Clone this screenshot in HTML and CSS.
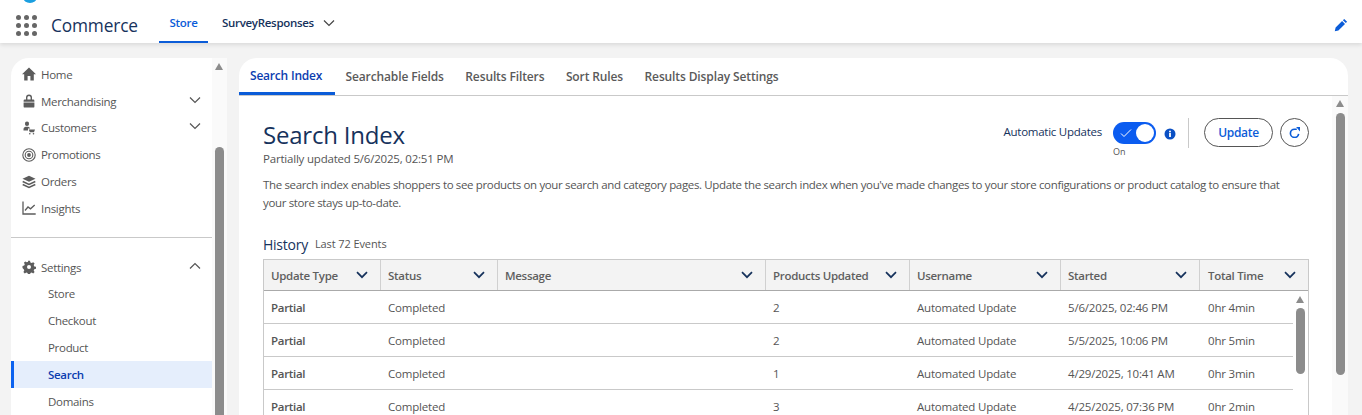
FILE: index.html
```html
<!DOCTYPE html>
<html lang="en">
<head>
<meta charset="UTF-8" />
<title>Commerce - Search Index</title>
<link rel="stylesheet" href="styles.css">
</head>
<body>
  <header class="topbar">
    <span class="logo-dot"></span>
    <div class="waffle">
      <i></i><i></i><i></i><i></i><i></i><i></i><i></i><i></i><i></i>
    </div>
    <div class="app-name">Commerce</div>
    <nav class="app-nav">
      <a class="app-tab active">Store</a>
      <a class="app-tab">SurveyResponses
        <svg class="chev-sm" viewBox="0 0 12 8"><path d="M1 1.500l5 5 5-5" fill="none" stroke="#444" stroke-width="1.200"/></svg>
      </a>
    </nav>
    <svg class="edit" viewBox="0 0 14 14"><path d="M10.200.9l2.900 2.900-1.300 1.300-2.900-2.900zM8.100 3l2.900 2.900-6.600 6.600-3.600.8.800-3.700z" fill="#0b5cd8"/></svg>
  </header>

  <div class="shell">
    <aside class="sidebar">
      <div class="side-list">
        <a class="side-item"><svg class="ico" viewBox="0 0 14 14"><path d="M7 .5L0 7.200h2.200V13.500h3.400V9h2.800v4.500h3.400V7.200H14z" fill="#5c5c5c"/></svg>Home</a>
        <a class="side-item"><svg class="ico" viewBox="0 0 14 14"><path d="M4 5.500V3.500a3 3 0 016 0v2H8.600v-2a1.600 1.600 0 00-3.200 0v2zM2.800 5.500h8.400a1.200 1.200 0 011.200 1.200v1.100H1.600V6.700a1.200 1.200 0 011.200-1.200zM1.600 8.400h10.800v4a1.200 1.200 0 01-1.200 1.200H2.800a1.200 1.200 0 01-1.200-1.200z" fill="#5c5c5c"/></svg>Merchandising<svg class="chev" viewBox="0 0 12 8"><path d="M1 1.500l5 5 5-5" fill="none" stroke="#555" stroke-width="1.200"/></svg></a>
        <a class="side-item"><svg class="ico" viewBox="0 0 14 14"><path d="M5 .5a2 2 0 012 2.200C7 4 6.300 5 5 5S3 4 3 2.700A2 2 0 015 .5zM1.500 8c0-1.600 1.500-2.200 3.500-2.200S7.700 6.300 8.200 7.400H6V9.500H1.500zM6.800 8.500H13l-1 2.800H7.800zM7.800 12a.8.8 0 110 1.600.8.800 0 010-1.600zM11.500 12a.8.8 0 110 1.600.8.800 0 010-1.600z" fill="#5c5c5c"/></svg>Customers<svg class="chev" viewBox="0 0 12 8"><path d="M1 1.500l5 5 5-5" fill="none" stroke="#555" stroke-width="1.200"/></svg></a>
        <a class="side-item"><svg class="ico" viewBox="0 0 14 14"><g fill="none" stroke="#5c5c5c" stroke-width="1.100"><circle cx="7" cy="7" r="6.200"/><circle cx="7" cy="7" r="3.800"/></g><circle cx="7" cy="7" r="1.900" fill="#5c5c5c"/></svg>Promotions</a>
        <a class="side-item"><svg class="ico" viewBox="0 0 14 14"><path d="M7 .8l6.500 3L7 6.800.5 3.800z" fill="#5c5c5c"/><path d="M.7 6.500L7 9.400l6.300-2.900M.7 9.500L7 12.400l6.300-2.900" fill="none" stroke="#5c5c5c" stroke-width="1.500"/></svg>Orders</a>
        <a class="side-item"><svg class="ico" viewBox="0 0 14 14"><path d="M1 .5v12.500h12.700" fill="none" stroke="#5c5c5c" stroke-width="1.300"/><path d="M3 9.500l3-3.500 2.500 1.800L12.700 4" fill="none" stroke="#5c5c5c" stroke-width="1.300"/></svg>Insights</a>
      </div>
      <div class="side-rule"></div>
      <div class="side-list">
        <a class="side-item"><svg class="ico" viewBox="0 0 14 14"><path fill-rule="evenodd" d="M6 .8h2l.4 1.700 1.300.6 1.500-.9 1.400 1.400-.9 1.500.6 1.300 1.700.4v2l-1.700.4-.6 1.300.9 1.500-1.400 1.400-1.500-.9-1.300.6-.4 1.700H6l-.4-1.700-1.300-.6-1.500.9-1.400-1.400.9-1.500-.6-1.300L.5 8V6l1.700-.4.600-1.300-.9-1.500 1.400-1.400 1.500.9 1.300-.6zM7 5a2 2 0 100 4 2 2 0 000-4z" fill="#5c5c5c"/></svg>Settings<svg class="chev" viewBox="0 0 12 8"><path d="M1 6.500l5-5 5 5" fill="none" stroke="#555" stroke-width="1.200"/></svg></a>
        <a class="side-item sub">Store</a>
        <a class="side-item sub">Checkout</a>
        <a class="side-item sub">Product</a>
        <a class="side-item sub selected">Search</a>
        <a class="side-item sub">Domains</a>
      </div>
      <div class="scroll side-scroll"><b class="arrow"></b><b class="thumb"></b></div>
    </aside>

    <main class="card">
      <nav class="tabs">
        <a class="tab active">Search Index</a>
        <a class="tab">Searchable Fields</a>
        <a class="tab">Results Filters</a>
        <a class="tab">Sort Rules</a>
        <a class="tab">Results Display Settings</a>
      </nav>
      <div class="card-body">
        <section class="content">
          <div class="title-row">
            <div>
              <h1>Search Index</h1>
              <div class="updated">Partially updated 5/6/2025, 02:51 PM</div>
            </div>
            <div class="actions">
              <span class="auto-label">Automatic Updates</span>
              <div class="toggle-wrap">
                <div class="toggle">
                  <svg viewBox="0 0 12 10"><path d="M1 5.500l3 3 7-7" fill="none" stroke="#fff" stroke-width="1"/></svg>
                  <span class="knob"></span>
                </div>
                <span class="toggle-state">On</span>
              </div>
              <svg class="info" viewBox="0 0 12 12"><circle cx="6" cy="6" r="5.500" fill="#0b50c4"/><rect x="5.100" y="5" width="1.800" height="4" fill="#fff"/><rect x="5.100" y="2.700" width="1.800" height="1.600" fill="#fff"/></svg>
              <span class="v-rule"></span>
              <button class="btn">Update</button>
              <button class="btn-icon"><svg viewBox="0 0 12 12"><path d="M10.500 7.500A4.500 4.500 0 116 2.400h2.500" fill="none" stroke="#0b5cd8" stroke-width="1.800"/><path d="M7.800 0l4.200 0v4.800z" fill="#0b5cd8"/></svg></button>
            </div>
          </div>
          <p class="desc">The search index enables shoppers to see products on your search and category pages. Update the search index when you've made changes to your store configurations or product catalog to ensure that your store stays up-to-date.</p>
          <div class="history-head"><h2>History</h2><span>Last 72 Events</span></div>
          <div class="table">
            <div class="row head">
              <div class="th">Update Type<svg viewBox="0 0 12 8"><path d="M1 1.200l5 5 5-5" fill="none" stroke="#16325c" stroke-width="1.700"/></svg></div>
              <div class="th">Status<svg viewBox="0 0 12 8"><path d="M1 1.200l5 5 5-5" fill="none" stroke="#16325c" stroke-width="1.700"/></svg></div>
              <div class="th">Message<svg viewBox="0 0 12 8"><path d="M1 1.200l5 5 5-5" fill="none" stroke="#16325c" stroke-width="1.700"/></svg></div>
              <div class="th">Products Updated<svg viewBox="0 0 12 8"><path d="M1 1.200l5 5 5-5" fill="none" stroke="#16325c" stroke-width="1.700"/></svg></div>
              <div class="th">Username<svg viewBox="0 0 12 8"><path d="M1 1.200l5 5 5-5" fill="none" stroke="#16325c" stroke-width="1.700"/></svg></div>
              <div class="th">Started<svg viewBox="0 0 12 8"><path d="M1 1.200l5 5 5-5" fill="none" stroke="#16325c" stroke-width="1.700"/></svg></div>
              <div class="th last">Total Time<svg viewBox="0 0 12 8"><path d="M1 1.200l5 5 5-5" fill="none" stroke="#16325c" stroke-width="1.700"/></svg></div>
            </div>
            <div class="table-body">
              <div class="rows">
                <div class="row"><div class="td strong">Partial</div><div class="td">Completed</div><div class="td"></div><div class="td">2</div><div class="td">Automated Update</div><div class="td">5/6/2025, 02:46 PM</div><div class="td">0hr 4min</div></div>
                <div class="row"><div class="td strong">Partial</div><div class="td">Completed</div><div class="td"></div><div class="td">2</div><div class="td">Automated Update</div><div class="td">5/5/2025, 10:06 PM</div><div class="td">0hr 5min</div></div>
                <div class="row"><div class="td strong">Partial</div><div class="td">Completed</div><div class="td"></div><div class="td">1</div><div class="td">Automated Update</div><div class="td">4/29/2025, 10:41 AM</div><div class="td">0hr 3min</div></div>
                <div class="row"><div class="td strong">Partial</div><div class="td">Completed</div><div class="td"></div><div class="td">3</div><div class="td">Automated Update</div><div class="td">4/25/2025, 07:36 PM</div><div class="td">0hr 2min</div></div>
              </div>
              <div class="scroll table-scroll"><b class="arrow"></b><b class="thumb"></b></div>
            </div>
          </div>
        </section>
        <div class="scroll main-scroll"><b class="arrow"></b><b class="thumb"></b></div>
      </div>
    </main>
  </div>
</body>
</html>
```

FILE: styles.css
```css
* { box-sizing: border-box; }
html, body { height: 100%; }
body { margin: 0; height: 415px; overflow: hidden; background: #f3f3f3; color: #444; font-family: "Open Sans", "Noto Sans", Arial, sans-serif; font-size: 12px; }
svg { display: block; flex: none; }
h1, h2, p { margin: 0; font-weight: 400; }

/* top bar */
.topbar { position: relative; display: flex; align-items: center; height: 43px; padding: 7px 14px 0 16px; background: #fff; box-shadow: 0 2px 4px rgba(0,0,0,.1); }
.logo-dot { position: absolute; left: 23px; top: -9px; width: 14px; height: 12px; border-radius: 50%; background: #1b9fe0; }
.waffle { display: grid; grid-template-columns: repeat(3, 5px); gap: 3px; width: 21px; }
.waffle i { width: 5px; height: 5px; border-radius: 50%; background: #666; }
.app-name { margin-left: 14px; width: 108px; font-size: 17.300px; color: #16325c; letter-spacing: -.15px; }
.app-nav { display: flex; align-self: stretch; }
.app-tab { display: flex; align-items: center; gap: 9px; padding: 0 11px 5px; margin-right: 3px; font-size: 11.500px; font-weight: 600; color: #16325c; letter-spacing: -.3px; }
.app-tab.active { width: 49px; color: #0b5cd8; border-bottom: 2px solid #0b5cd8; padding: 0 0 3px 10.500px; margin-right: 3px; }
.chev-sm { width: 12px; height: 8px; }
.edit { margin-left: auto; width: 14px; height: 14px; margin-top: -1px; }

/* page */
.shell { display: grid; grid-template-columns: 216px 1109px; column-gap: 12px; padding: 15px 0 0 11px; height: 372px; }

/* sidebar */
.sidebar { position: relative; height: 357px; background: #fff; border-radius: 18px 0 0 0; padding-right: 15px; }
.side-list { padding-top: 3px; }
.side-list + .side-rule + .side-list { padding-top: 4px; }
.side-item { display: flex; align-items: center; height: 26.800px; padding: 0 11px; font-size: 11.500px; color: #555; letter-spacing: -.3px; }
.ico { width: 14px; height: 14px; margin-right: 5px; }
.chev { width: 12px; height: 8px; margin-left: auto; margin-top: -3px; }
.side-item.sub { padding-left: 37px; }
.side-item.selected { color: #0b3db0; font-weight: 600; background: #e5eefc; border-left: 3px solid #0b62f0; padding-left: 34px; }
.side-rule { height: 1px; margin: 15px 0 12px; background: #c9c9c9; }

/* scrollbars */
.scroll { position: absolute; background: #fafafa; }
.arrow { position: absolute; left: 3px; top: 5px; width: 0; height: 0; border: 4.500px solid transparent; border-top: 0; border-bottom: 7px solid #8c8c8c; }
.thumb { position: absolute; left: 3px; width: 9px; border-radius: 5px; background: #8c8c8c; }
.side-scroll { right: 0; top: 0; bottom: 0; width: 15px; }
.side-scroll .thumb { top: 89px; bottom: -8px; }

/* main card */
.card { display: flex; flex-direction: column; height: 358px; background: #fff; border-radius: 18px 18px 0 0; }
.tabs { display: flex; height: 38px; border-bottom: 1px solid #c9c9c9; }
.tab { display: flex; align-items: center; padding: 0 11px 1px; margin-left: -.5px; font-size: 12px; font-weight: 600; color: #5a5a5a; letter-spacing: -.12px; }
.tab.active { margin-left: 0; min-width: 96px; color: #0b3db0; letter-spacing: -.2px; border-bottom: 3px solid #0b5cd8; height: 37px; padding-top: 2px; }
.card-body { position: relative; flex: 1; overflow: hidden; padding: 0 39px 0 24px; }
.main-scroll { right: 0; top: 0; bottom: 0; width: 16px; }
.main-scroll .arrow { left: 4px; top: 4px; }
.main-scroll .thumb { left: 4px; top: 17px; height: 262px; }

.title-row { display: flex; justify-content: space-between; align-items: flex-start; padding-top: 23px; }
h1 { font-size: 24px; line-height: 31px; color: #16325c; letter-spacing: -.2px; }
.updated { margin-top: 1px; font-size: 11.500px; line-height: 16px; color: #555; letter-spacing: -.2px; }
.actions { display: flex; align-items: flex-start; margin-top: -1px; }
.auto-label { margin-top: 6px; font-size: 11.500px; color: #16325c; letter-spacing: -.25px; }
.toggle-wrap { margin-left: 11px; margin-top: 4px; }
.toggle { position: relative; width: 43px; height: 22px; border-radius: 11px; background: #0b5cf0; }
.toggle svg { position: absolute; left: 7px; top: 6px; width: 12px; height: 10px; }
.knob { position: absolute; right: 2px; top: 2px; width: 18px; height: 18px; border-radius: 50%; background: #fff; }
.toggle-state { display: block; margin-top: 1px; font-size: 9px; line-height: 14px; color: #555; }
.info { width: 12px; height: 12px; margin: 10px 0 0 8px; }
.v-rule { width: 1px; height: 30px; margin: 0 15px 0 12px; background: #c9c9c9; }
.btn { height: 29px; width: 69px; padding: 0; border: 1px solid #555; border-radius: 15px; background: #fff; color: #0b5cd8; font: 600 12px "Open Sans", sans-serif; letter-spacing: -.3px; }
.btn-icon { display: flex; align-items: center; justify-content: center; width: 29px; height: 29px; margin-left: 7px; padding: 0; border: 1px solid #555; border-radius: 50%; background: #fff; }
.btn-icon svg { width: 11px; height: 11px; }
.desc { max-width: 1030px; margin-top: 9px; font-size: 11.500px; line-height: 18px; color: #555; letter-spacing: -.35px; }

.history-head { display: flex; align-items: center; gap: 7px; margin-top: 23px; }
h2 { font-size: 14px; line-height: 19px; color: #16325c; letter-spacing: -.25px; }
.history-head span { margin-bottom: 3px; font-size: 11px; color: #555; letter-spacing: -.1px; }

/* table */
.table { margin-top: 5px; border: 1px solid #c9c9c9; border-bottom: 0; }
.row { display: grid; grid-template-columns: 117px 117px 268px 144px 151px 139px 1fr; }
.row.head { height: 30px; background: #f3f3f3; border-bottom: 1px solid #aaa; box-sizing: content-box; }
.th { display: flex; align-items: center; justify-content: space-between; height: 30px; padding: 0 12px 0 7px; font-size: 11.500px; font-weight: 600; color: #5f5f5f; letter-spacing: -.3px; border-right: 1px solid #d0d0d0; }
.th.last { border-right: 0; padding-left: 8px; }
.th svg { width: 12px; height: 8px; }
.table-body { position: relative; display: flex; }
.rows { flex: 1; }
.rows .row { height: 33px; border-bottom: 1px solid #c9c9c9; }
.td { display: flex; align-items: center; padding-left: 7px; font-size: 11.500px; color: #555; letter-spacing: -.2px; }
.td:last-child { padding-left: 8px; }
.td.strong { font-weight: 600; letter-spacing: -.3px; }
.table-scroll { position: relative; width: 15px; background: #fff; }
.table-scroll .arrow { left: 3px; top: 5px; }
.table-scroll .thumb { top: 17px; height: 66px; }
```
